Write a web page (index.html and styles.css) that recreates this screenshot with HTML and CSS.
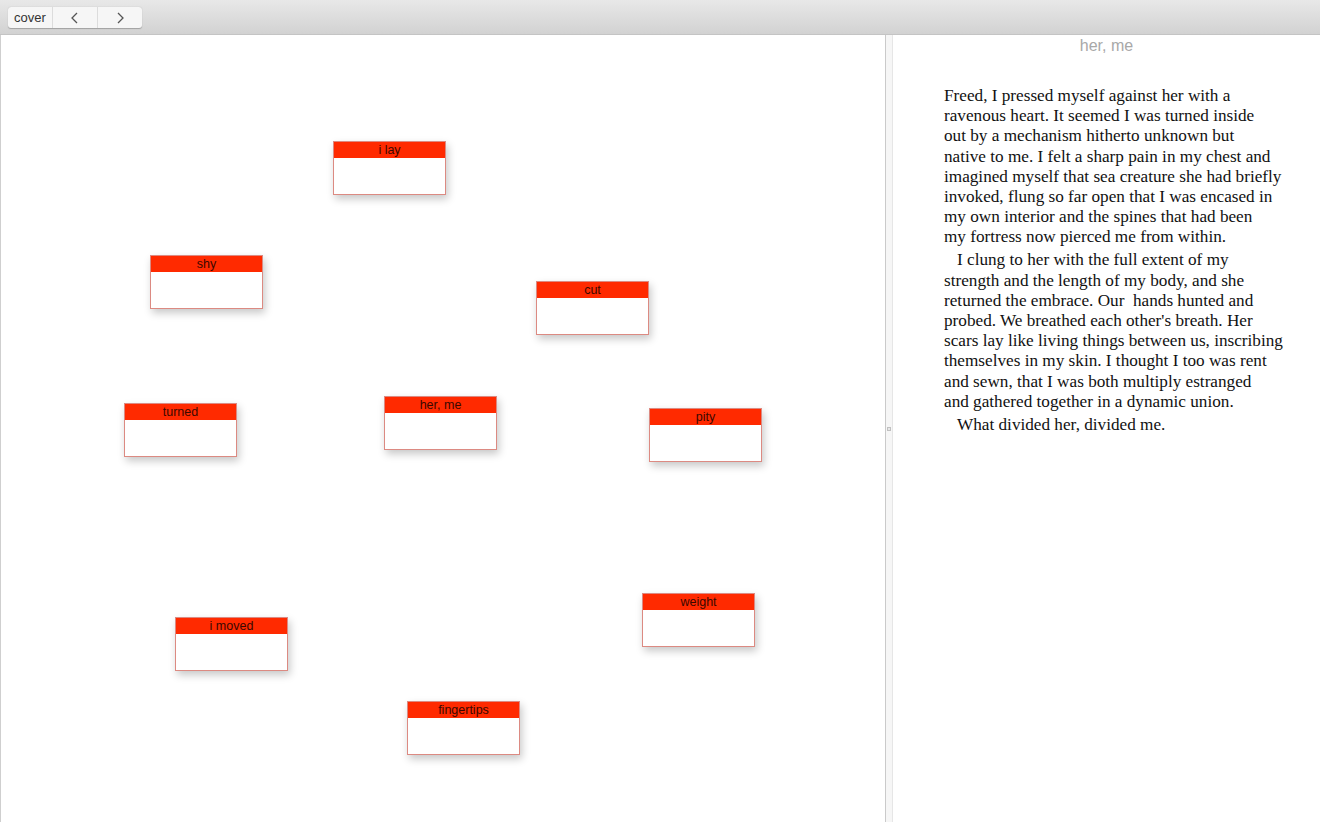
FILE: index.html
```html
<!DOCTYPE html>
<html>
<head>
<meta charset="utf-8">
<link rel="stylesheet" href="styles.css">
</head>
<body>
<div class="app">
  <div class="toolbar">
    <div class="seg">
      <button class="seg-btn cover">cover</button>
      <button class="seg-btn arrow"><svg width="10" height="12" viewBox="0 0 10 12"><path d="M7 1 L2 6 L7 11" fill="none" stroke="#555" stroke-width="1.3"/></svg></button>
      <button class="seg-btn arrow"><svg width="10" height="12" viewBox="0 0 10 12"><path d="M3 1 L8 6 L3 11" fill="none" stroke="#555" stroke-width="1.3"/></svg></button>
    </div>
  </div>
  <div class="main">
    <div class="canvas">
      <div class="card" style="left:333px;top:141px"><div class="card-head">i lay</div></div>
      <div class="card" style="left:150px;top:255px"><div class="card-head">shy</div></div>
      <div class="card" style="left:536px;top:281px"><div class="card-head">cut</div></div>
      <div class="card" style="left:124px;top:403px"><div class="card-head">turned</div></div>
      <div class="card" style="left:384px;top:396px"><div class="card-head">her, me</div></div>
      <div class="card" style="left:649px;top:408px"><div class="card-head">pity</div></div>
      <div class="card" style="left:642px;top:593px"><div class="card-head">weight</div></div>
      <div class="card" style="left:175px;top:617px"><div class="card-head">i moved</div></div>
      <div class="card" style="left:407px;top:701px"><div class="card-head">fingertips</div></div>
    </div>
    <div class="divider"><span class="handle"></span></div>
    <div class="reader">
      <div class="title">her, me</div>
      <div class="text">
        <p class="first">Freed, I pressed myself against her with a<br>ravenous heart. It seemed I was turned inside<br>out by a mechanism hitherto unknown but<br>native to me. I felt a sharp pain in my chest and<br>imagined myself that sea creature she had briefly<br>invoked, flung so far open that I was encased in<br>my own interior and the spines that had been<br>my fortress now pierced me from within.</p>
        <p>I clung to her with the full extent of my<br>strength and the length of my body, and she<br>returned the embrace. Our&nbsp; hands hunted and<br>probed. We breathed each other's breath. Her<br>scars lay like living things between us, inscribing<br>themselves in my skin. I thought I too was rent<br>and sewn, that I was both multiply estranged<br>and gathered together in a dynamic union.</p>
        <p>What divided her, divided me.</p>
      </div>
    </div>
  </div>
</div>
</body>
</html>
```
FILE: styles.css
```css
* { box-sizing: border-box; }
html, body { margin: 0; padding: 0; }
body {
  width: 1320px;
  height: 822px;
  overflow: hidden;
  font-family: "Liberation Sans", Arial, sans-serif;
  background: #fff;
}
.app { display: flex; flex-direction: column; height: 822px; }
.toolbar {
  height: 35px;
  flex: none;
  background: linear-gradient(#e8e8e8, #d2d2d2);
  border-bottom: 1px solid #c4c4c4;
  padding: 7px 0 0 8px;
}
.seg {
  display: flex;
  width: 134px;
  height: 21px;
  background: #f6f6f6;
  border-radius: 3px;
  box-shadow: 0 0.5px 1px rgba(0,0,0,0.25);
}
.seg-btn {
  border: none;
  background: transparent;
  padding: 0;
  height: 21px;
  display: flex;
  align-items: center;
  justify-content: center;
  font-family: "Liberation Sans", Arial, sans-serif;
  font-size: 13px;
  color: #333;
  border-right: 1px solid #dcdcdc;
}
.seg-btn:last-child { border-right: none; }
.cover { width: 45px; }
.arrow { width: 45px; }
.arrow:last-child { width: 44px; }
.main { flex: 1; display: flex; min-height: 0; }
.canvas {
  position: relative;
  width: 885px;
  flex: none;
  border-left: 1px solid #cfcfcf;
  background: #fff;
}
.card {
  position: absolute;
  width: 113px;
  height: 54px;
  margin-left: -1px;
  margin-top: -35px;
  background: #fff;
  border: 1px solid #dc8a82;
  box-shadow: 2px 4px 8px rgba(0,0,0,0.22);
}
.card-head {
  height: 16px;
  background: #ff2a00;
  color: #3a0800;
  font-size: 12.5px;
  line-height: 16px;
  text-align: center;
}
.divider {
  width: 8px;
  flex: none;
  background: #f6f6f6;
  border-left: 1px solid #cacaca;
  border-right: 1px solid #e6e6e6;
  display: flex;
  align-items: center;
  justify-content: center;
}
.handle {
  width: 4px;
  height: 4px;
  border: 1px solid #c0c0c0;
  background: #e8e8e8;
}
.reader { flex: 1; padding: 0 10px 0 51px; white-space: nowrap; }
.title {
  text-align: center;
  color: #a8a8a8;
  font-size: 16px;
  line-height: 20px;
  margin: 1px -10px 0 -51px;
}
.text {
  margin-top: 30px;
  font-family: "Liberation Serif", "Times New Roman", serif;
  font-size: 17.2px;
  line-height: 20.2px;
  color: #111;
}
.text p { margin: 0 0 2.7px 0; text-indent: 13px; }
.text p.first { text-indent: 0; }
```
